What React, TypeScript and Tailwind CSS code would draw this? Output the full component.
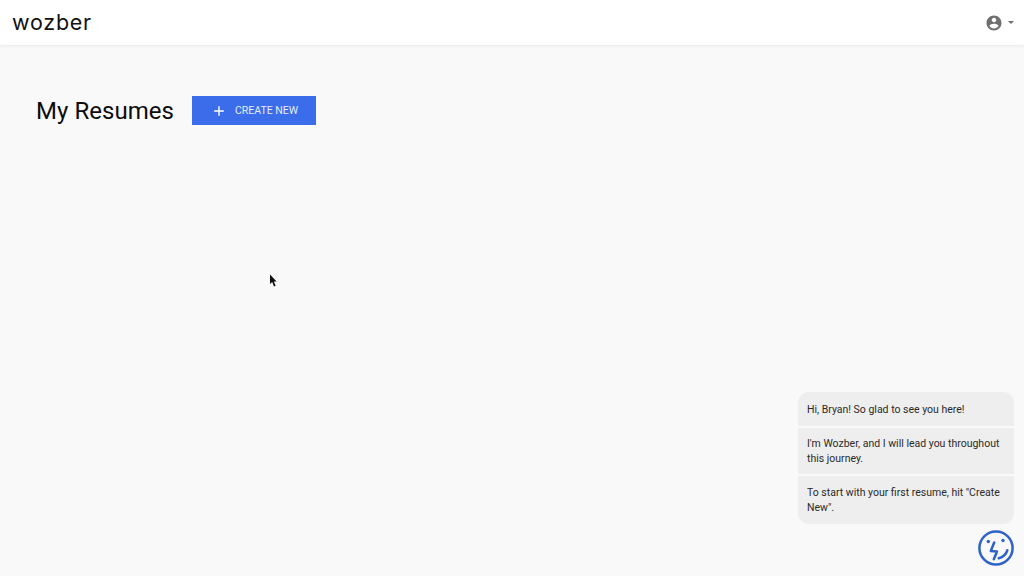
import React from "react";

function Face() {
  return (
    <svg width="36" height="36" viewBox="0 0 36 36" fill="none" stroke="#2f62c9" strokeWidth="2.5" strokeLinecap="round" strokeLinejoin="round">
      <circle cx="18" cy="18" r="16.6" />
      <circle cx="10.3" cy="11.5" r="1.7" fill="#2f62c9" stroke="none" />
      <circle cx="25" cy="10.5" r="1.7" fill="#2f62c9" stroke="none" />
      <path d="M16.2 12.5 L12.8 21 L19 21.5 L15.8 29.3" />
      <path d="M20.8 28.3 C25 27 28.2 24 29.3 20.3" />
    </svg>
  );
}

function Account() {
  return (
    <svg width="18" height="18" viewBox="0 0 24 24" fill="#6f6f6f">
      <path d="M12 2C6.48 2 2 6.48 2 12s4.48 10 10 10 10-4.48 10-10S17.52 2 12 2zm0 3c1.66 0 3 1.34 3 3s-1.34 3-3 3-3-1.34-3-3 1.34-3 3-3zm0 14.2c-2.5 0-4.71-1.28-6-3.22.03-1.99 4-3.08 6-3.08s5.97 1.09 6 3.08c-1.29 1.94-3.5 3.22-6 3.22z" />
    </svg>
  );
}

function Bubble({ children, cls }: { children: React.ReactNode; cls: string }) {
  return <div className={"bg-[#eeeeee] px-[9px] text-[10.5px] leading-[15px] text-[#2a2a2a] " + cls}>{children}</div>;
}

export default function App() {
  return (
    <div className="relative h-[576px] w-[1024px] overflow-hidden bg-[#f9f9f9] font-['Roboto',sans-serif]">
      <header className="flex h-[45px] items-center justify-between bg-white pl-3 pr-[10px] shadow-[0_1px_3px_rgba(0,0,0,0.07)]">
        <span className="font-['Inter',sans-serif] text-[21.5px] leading-none tracking-[0.75px] text-[#111111]">wozber</span>
        <div className="flex items-center gap-[5px]">
          <Account />
          <span className="h-0 w-0 border-x-[3px] border-t-[3px] border-x-transparent border-t-[#6f6f6f]" />
        </div>
      </header>

      <main className="flex items-center gap-[18px] pl-9 pt-[51px]">
        <h1 className="w-[138px] whitespace-nowrap text-[24px] font-normal leading-[28px] tracking-[0.05px] text-[#0c0c0c]">My Resumes</h1>
        <button className="flex h-[29px] w-[124px] items-center justify-center gap-[10px] bg-[#3b6cea] pl-[3px] text-[10.5px] text-[#e4ecfd]">
          <svg width="12" height="12" viewBox="0 0 12 12" stroke="#ffffff" strokeWidth="1.4">
            <path d="M6 1.2V10.8M1.2 6H10.8" />
          </svg>
          <span>CREATE NEW</span>
        </button>
      </main>

      <svg className="absolute left-[269px] top-[274px]" width="9" height="14" viewBox="0 0 9 14">
        <path d="M1 0.5V10L3.2 8.1L5 12.5L6.6 11.8L4.9 7.6H7.6Z" fill="#111111" />
      </svg>

      <aside className="absolute bottom-[10px] right-[10px] flex w-[216px] flex-col items-end gap-[6px]">
        <div className="flex w-full flex-col gap-[2px]">
          <Bubble cls="rounded-t-[11px] pb-[9px] pt-[10px]">Hi, Bryan! So glad to see you here!</Bubble>
          <Bubble cls="py-[8px]">I'm Wozber, and I will lead you throughout this journey.</Bubble>
          <Bubble cls="rounded-b-[11px] pb-[9px] pt-[9px]">To start with your first resume, hit "Create New".</Bubble>
        </div>
        <Face />
      </aside>
    </div>
  );
}
